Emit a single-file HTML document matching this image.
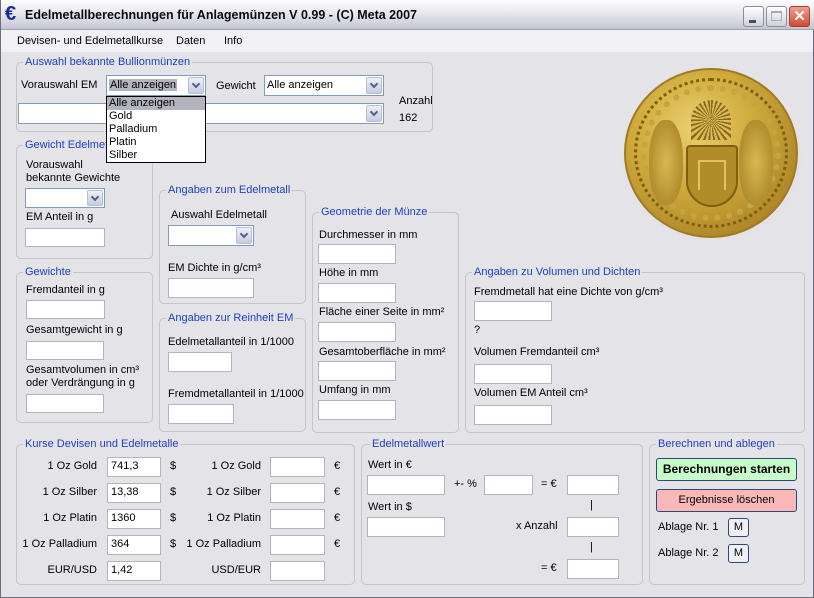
<!DOCTYPE html>
<html><head><meta charset="utf-8"><style>
*{box-sizing:border-box;margin:0;padding:0}
body{width:814px;height:598px;overflow:hidden;background:#fff;font-family:"Liberation Sans",Arial,sans-serif;font-size:11px;color:#000;position:relative}
.win{position:absolute;left:0;top:0;width:814px;height:598px;background:#e3e3e8;border:1px solid #6e6e7a;border-top:none}
.title{position:absolute;left:0;top:0;width:814px;height:30px;background:linear-gradient(#fdfdfe 0%,#ececf2 35%,#d6d6e0 75%,#c4c4d0 100%);border-bottom:1px solid #a0a0b0}
.title span{position:absolute;left:24px;top:8px;font-weight:bold;font-size:12.5px;color:#0a0a10}
.euro{position:absolute;left:4px;top:4px;font-size:20px;font-weight:bold;color:#1a2a9a;line-height:20px}
.tb{position:absolute;top:6px;width:21px;height:21px;border:1px solid #8c8ca0;border-radius:3px;background:linear-gradient(#fff,#d0d0dc)}
.menu{position:absolute;left:0;top:30px;width:812px;height:22px;background:#f0f0f5}
.menu span{position:absolute;top:5px}
.a{position:absolute;white-space:nowrap;line-height:13px}
.g{position:absolute;border:1px solid #c5c5c5;border-radius:5px}
.gt{position:absolute;top:-8px;left:6px;background:#e3e3e8;color:#1f3fbf;padding:0 2px;line-height:14px;white-space:nowrap}
.i{position:absolute;background:#fff;border:1px solid #b4b4bc}
.cb{position:absolute;background:#fff;border:1px solid #7f9db9}
.cb .btn{position:absolute;right:1px;top:1px;bottom:1px;width:16px;background:linear-gradient(#eef0f8,#c6cbe0);border:1px solid #b8c0d8;border-radius:2px}
.cb .btn:after{content:"";position:absolute;left:4px;top:3px;width:4px;height:4px;border-right:2px solid #4d6185;border-bottom:2px solid #4d6185;transform:rotate(45deg)}
.r{text-align:right}
</style></head><body>
<div class="win">
<div class="title"><div class="euro">€</div><span>Edelmetallberechnungen für Anlagemünzen V 0.99 - (C) Meta 2007</span>
<div class="tb" style="left:742px"><div style="position:absolute;left:5px;top:13px;width:7px;height:3px;background:#4a4a5a"></div></div>
<div class="tb" style="left:765px"><div style="position:absolute;left:4px;top:4px;width:11px;height:10px;border:1px solid #aaa;border-top:2px solid #aaa"></div></div>
<div class="tb" style="left:788px;background:linear-gradient(#f0a090,#d04a30);border-color:#a04030;color:#fff;font-weight:bold;text-align:center;font-size:15px;line-height:19px">✕</div>
</div>
<div class="menu"><span style="left:16px">Devisen- und Edelmetallkurse</span><span style="left:175px">Daten</span><span style="left:223px">Info</span></div>

<!-- coin -->
<div style="position:absolute;left:618px;top:72px;width:186px;height:172px;border-radius:50%;background:radial-gradient(ellipse at 50% 50%,rgba(0,0,0,0.15),rgba(0,0,0,0) 70%)"></div>
<div style="position:absolute;left:623px;top:68px;width:174px;height:170px;border-radius:50%;background:radial-gradient(circle at 40% 35%,#e9d070 0%,#d0ab3c 40%,#b08828 75%,#8a6818 100%);border:2px solid #9e7a22"></div>
<div style="position:absolute;left:633px;top:78px;width:154px;height:150px;border-radius:50%;border:3px dotted #7d5e14"></div>
<div style="position:absolute;left:640px;top:85px;width:140px;height:136px;border-radius:50%;border:6px dotted #c8a440"></div>
<div style="position:absolute;left:685px;top:145px;width:52px;height:62px;border-radius:4px 4px 26px 26px;background:#b38c2a;border:2px solid #7d5e14"></div>
<div style="position:absolute;left:697px;top:160px;width:28px;height:30px;border:2px solid #e0c260;border-bottom:none"></div>
<div style="position:absolute;left:690px;top:100px;width:40px;height:40px;border-radius:50% 50% 0 0;background:repeating-conic-gradient(#8a6a1a 0 6deg,#d8bb58 6deg 14deg)"></div>
<div style="position:absolute;left:648px;top:120px;width:34px;height:85px;border-radius:45%;background:radial-gradient(#d9b850,#a07c20)"></div>
<div style="position:absolute;left:738px;top:120px;width:34px;height:85px;border-radius:45%;background:radial-gradient(#d9b850,#a07c20)"></div>

<div class="g" style="left:15px;top:62px;width:417px;height:70px"><div class="gt">Auswahl bekannte Bullionmünzen</div></div>
<div class="a" style="left:20px;top:79px">Vorauswahl EM</div>
<div class="cb" style="left:105px;top:75px;width:100px;height:21px"><span style="position:absolute;left:2px;top:3px;background:#b4b4bc;padding:0 1px">Alle anzeigen</span><div class="btn"></div></div>
<div class="a" style="left:215px;top:80px">Gewicht</div>
<div class="cb" style="left:263px;top:75px;width:120px;height:21px"><span style="position:absolute;left:2px;top:3px">Alle anzeigen</span><div class="btn"></div></div>
<div class="cb" style="left:17px;top:103px;width:366px;height:21px"><div class="btn"></div></div>
<div class="a" style="left:398px;top:95px">Anzahl</div>
<div class="a" style="left:398px;top:112px">162</div>

<div class="g" style="left:15px;top:145px;width:137px;height:114px"><div class="gt">Gewicht Edelmetall</div></div>
<div class="a" style="left:25px;top:159px">Vorauswahl</div>
<div class="a" style="left:25px;top:172px">bekannte Gewichte</div>
<div class="cb" style="left:24px;top:188px;width:80px;height:20px"><div class="btn"></div></div>
<div class="a" style="left:25px;top:211px">EM Anteil in g</div>
<div class="i" style="left:24px;top:228px;width:80px;height:19px"></div>

<div class="g" style="left:15px;top:272px;width:137px;height:151px"><div class="gt">Gewichte</div></div>
<div class="a" style="left:25px;top:284px">Fremdanteil in g</div>
<div class="i" style="left:25px;top:300px;width:79px;height:19px"></div>
<div class="a" style="left:25px;top:324px">Gesamtgewicht in g</div>
<div class="i" style="left:25px;top:341px;width:78px;height:19px"></div>
<div class="a" style="left:25px;top:364px">Gesamtvolumen in cm³</div>
<div class="a" style="left:25px;top:377px">oder Verdrängung in g</div>
<div class="i" style="left:25px;top:394px;width:78px;height:19px"></div>

<div class="g" style="left:158px;top:190px;width:147px;height:114px"><div class="gt">Angaben zum Edelmetall</div></div>
<div class="a" style="left:170px;top:209px">Auswahl Edelmetall</div>
<div class="cb" style="left:167px;top:225px;width:86px;height:21px"><div class="btn"></div></div>
<div class="a" style="left:167px;top:262px">EM Dichte in g/cm³</div>
<div class="i" style="left:167px;top:278px;width:86px;height:20px"></div>

<div class="g" style="left:158px;top:318px;width:147px;height:114px"><div class="gt">Angaben zur Reinheit EM</div></div>
<div class="a" style="left:167px;top:336px">Edelmetallanteil in 1/1000</div>
<div class="i" style="left:167px;top:352px;width:64px;height:20px"></div>
<div class="a" style="left:167px;top:388px">Fremdmetallanteil in 1/1000</div>
<div class="i" style="left:167px;top:404px;width:66px;height:20px"></div>

<div class="g" style="left:311px;top:212px;width:147px;height:221px"><div class="gt">Geometrie der Münze</div></div>
<div class="a" style="left:318px;top:229px">Durchmesser in mm</div>
<div class="i" style="left:317px;top:244px;width:78px;height:20px"></div>
<div class="a" style="left:318px;top:267px">Höhe in mm</div>
<div class="i" style="left:317px;top:283px;width:78px;height:20px"></div>
<div class="a" style="left:318px;top:306px">Fläche einer Seite in mm²</div>
<div class="i" style="left:317px;top:322px;width:78px;height:20px"></div>
<div class="a" style="left:318px;top:346px">Gesamtoberfläche in mm²</div>
<div class="i" style="left:317px;top:361px;width:78px;height:20px"></div>
<div class="a" style="left:318px;top:384px">Umfang in mm</div>
<div class="i" style="left:317px;top:400px;width:78px;height:20px"></div>

<div class="g" style="left:464px;top:272px;width:340px;height:161px"><div class="gt">Angaben zu Volumen und Dichten</div></div>
<div class="a" style="left:473px;top:286px">Fremdmetall hat eine Dichte von g/cm³</div>
<div class="i" style="left:473px;top:301px;width:78px;height:20px"></div>
<div class="a" style="left:473px;top:324px">?</div>
<div class="a" style="left:473px;top:346px">Volumen Fremdanteil cm³</div>
<div class="i" style="left:473px;top:364px;width:78px;height:20px"></div>
<div class="a" style="left:473px;top:387px">Volumen EM Anteil cm³</div>
<div class="i" style="left:473px;top:405px;width:78px;height:20px"></div>

<div class="g" style="left:15px;top:444px;width:339px;height:141px"><div class="gt">Kurse Devisen und Edelmetalle</div></div>
<div class="a r" style="left:16px;width:80px;top:460px">1 Oz Gold</div>
<div class="a r" style="left:16px;width:80px;top:486px">1 Oz Silber</div>
<div class="a r" style="left:16px;width:80px;top:512px">1 Oz Platin</div>
<div class="a r" style="left:16px;width:80px;top:538px">1 Oz Palladium</div>
<div class="a r" style="left:16px;width:80px;top:564px">EUR/USD</div>
<div class="i" style="left:106px;top:457px;width:54px;height:20px;padding:2px 0 0 3px">741,3</div>
<div class="i" style="left:106px;top:483px;width:54px;height:20px;padding:2px 0 0 3px">13,38</div>
<div class="i" style="left:106px;top:509px;width:54px;height:20px;padding:2px 0 0 3px">1360</div>
<div class="i" style="left:106px;top:535px;width:54px;height:20px;padding:2px 0 0 3px">364</div>
<div class="i" style="left:106px;top:561px;width:54px;height:20px;padding:2px 0 0 3px">1,42</div>
<div class="a" style="left:169px;top:460px">$</div><div class="a" style="left:169px;top:486px">$</div><div class="a" style="left:169px;top:512px">$</div><div class="a" style="left:169px;top:538px">$</div>
<div class="a r" style="left:170px;width:90px;top:460px">1 Oz Gold</div>
<div class="a r" style="left:170px;width:90px;top:486px">1 Oz Silber</div>
<div class="a r" style="left:170px;width:90px;top:512px">1 Oz Platin</div>
<div class="a r" style="left:170px;width:90px;top:538px">1 Oz Palladium</div>
<div class="a r" style="left:170px;width:90px;top:564px">USD/EUR</div>
<div class="i" style="left:269px;top:457px;width:55px;height:20px"></div>
<div class="i" style="left:269px;top:483px;width:55px;height:20px"></div>
<div class="i" style="left:269px;top:509px;width:55px;height:20px"></div>
<div class="i" style="left:269px;top:535px;width:55px;height:20px"></div>
<div class="i" style="left:269px;top:561px;width:55px;height:20px"></div>
<div class="a" style="left:333px;top:460px">€</div><div class="a" style="left:333px;top:486px">€</div><div class="a" style="left:333px;top:512px">€</div><div class="a" style="left:333px;top:538px">€</div>

<div class="g" style="left:360px;top:444px;width:282px;height:141px"><div class="gt" style="left:8px">Edelmetallwert</div></div>
<div class="a" style="left:367px;top:459px">Wert in €</div>
<div class="i" style="left:366px;top:475px;width:78px;height:20px"></div>
<div class="a" style="left:453px;top:478px">+- %</div>
<div class="i" style="left:483px;top:475px;width:49px;height:20px"></div>
<div class="a" style="left:540px;top:478px">= €</div>
<div class="i" style="left:566px;top:475px;width:52px;height:20px"></div>
<div class="a" style="left:589px;top:499px">|</div>
<div class="a" style="left:367px;top:501px">Wert in $</div>
<div class="i" style="left:366px;top:517px;width:78px;height:20px"></div>
<div class="a" style="left:515px;top:520px">x Anzahl</div>
<div class="i" style="left:566px;top:517px;width:52px;height:20px"></div>
<div class="a" style="left:589px;top:541px">|</div>
<div class="a" style="left:540px;top:562px">= €</div>
<div class="i" style="left:566px;top:559px;width:52px;height:20px"></div>

<div class="g" style="left:648px;top:444px;width:156px;height:141px"><div class="gt">Berechnen und ablegen</div></div>
<div style="position:absolute;left:655px;top:458px;width:141px;height:23px;background:#c8fcc8;border:1px solid #2b4a78;border-radius:3px;text-align:center;font-weight:bold;font-size:12px;line-height:21px">Berechnungen starten</div>
<div style="position:absolute;left:655px;top:489px;width:141px;height:23px;background:#fbb8b8;border:1px solid #2b4a78;border-radius:3px;text-align:center;line-height:21px">Ergebnisse löschen</div>
<div class="a" style="left:657px;top:521px">Ablage Nr. 1</div>
<div style="position:absolute;left:727px;top:518px;width:21px;height:19px;background:#eef0f6;border:1px solid #2b4a78;border-radius:3px;text-align:center;line-height:17px">M</div>
<div class="a" style="left:657px;top:547px">Ablage Nr. 2</div>
<div style="position:absolute;left:727px;top:544px;width:21px;height:19px;background:#eef0f6;border:1px solid #2b4a78;border-radius:3px;text-align:center;line-height:17px">M</div>

<!-- dropdown list -->
<div style="position:absolute;left:105px;top:96px;width:100px;height:67px;background:#fff;border:1px solid #000">
<div style="height:13px;line-height:13px;background:#b4b4bc;padding-left:2px">Alle anzeigen</div>
<div style="height:13px;line-height:13px;padding-left:2px">Gold</div>
<div style="height:13px;line-height:13px;padding-left:2px">Palladium</div>
<div style="height:13px;line-height:13px;padding-left:2px">Platin</div>
<div style="height:13px;line-height:13px;padding-left:2px">Silber</div>
</div>
</div>
</body></html>
